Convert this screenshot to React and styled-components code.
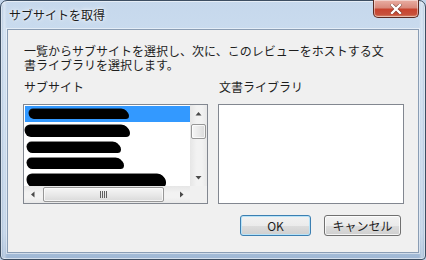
import React from "react";
import styled, { createGlobalStyle } from "styled-components";

const Global = createGlobalStyle`
  html, body { margin: 0; padding: 0; width: 426px; height: 260px; overflow: hidden; background: #c3d5ea; }
  * { box-sizing: border-box; }
`;

const FONT = `"Noto Sans CJK JP", "Noto Sans", sans-serif`;

const Window = styled.div`
  width: 426px;
  height: 260px;
  display: flex;
  flex-direction: column;
  padding: 0 6px 6px 6px;
  border: 1px solid #3d4e62;
  border-radius: 7px 7px 4px 4px;
  background:
    linear-gradient(to right, rgba(120,150,185,0.35) 0px, rgba(255,255,255,0.35) 3px, rgba(255,255,255,0) 6px, rgba(255,255,255,0) 418px, rgba(255,255,255,0.35) 421px, rgba(120,150,185,0.35) 424px),
    linear-gradient(to bottom, #c6d8ec 0%, #c9dbee 12%, #bfd3e9 50%, #b6cbe3 90%, #9fb7d4 100%);
  box-shadow: inset 0 0 0 1px rgba(255,255,255,0.55);
  font-family: ${FONT};
  color: #1e1e1e;
`;

const TitleBar = styled.div`
  height: 28px;
  display: flex;
  align-items: flex-start;
  justify-content: space-between;
`;

const Title = styled.div`
  font-size: 12px;
  line-height: 14px;
  padding: 7px 0 0 2px;
  color: #1b1b1b;
  text-shadow: 0 0 6px rgba(255,255,255,0.9), 0 0 3px rgba(255,255,255,0.9);
`;

const CloseButton = styled.div`
  width: 46px;
  height: 18px;
  margin-top: -1px;
  border: 1px solid #5a2a22;
  border-top: none;
  border-radius: 0 0 5px 5px;
  background: linear-gradient(to bottom, #e9aea3 0%, #d98a7c 45%, #c8442f 55%, #c7503b 85%, #d98d6f 100%);
  box-shadow: inset 0 0 0 1px rgba(255,255,255,0.45);
  display: flex;
  align-items: center;
  justify-content: center;
`;

const Client = styled.div`
  flex: 1;
  display: flex;
  flex-direction: column;
  background: #f0f0f0;
  border: 1px solid #8a9db4;
  box-shadow: 0 0 0 1px rgba(255,255,255,0.5);
  padding: 14px 14px 16px 15px;
  font-size: 12px;
`;

const Intro = styled.div`
  line-height: 14px;
  padding-left: 1px;
  white-space: nowrap;
`;

const Columns = styled.div`
  margin-top: 8px;
  display: grid;
  grid-template-columns: 185px 186px;
  column-gap: 10px;
`;

const Column = styled.div`
  display: flex;
  flex-direction: column;
`;

const Label = styled.div`
  line-height: 14px;
  height: 14px;
  padding-left: 1px;
  margin-bottom: 10px;
`;

const ListFrame = styled.div`
  height: 100px;
  border: 1px solid #828790;
  background: #fff;
  display: grid;
  grid-template-columns: ${(p) => (p.$scroll ? "1fr 17px" : "1fr")};
  grid-template-rows: ${(p) => (p.$scroll ? "1fr 17px" : "1fr")};
`;

const Rows = styled.div`
  padding: 1px 0 0 1px;
  overflow: hidden;
`;

const Row = styled.div`
  height: 16px;
  display: flex;
  align-items: center;
  background: ${(p) => (p.$selected ? "#3399ff" : "transparent")};
`;

const Blob = styled.span`
  display: block;
  height: ${(p) => p.$h}px;
  width: ${(p) => p.$w}px;
  margin-left: ${(p) => p.$x}px;
  margin-top: ${(p) => p.$y || 0}px;
  background: #000;
  border-radius: 6px 7px 5px 6px;
  box-shadow: 2px 1px 0 -1px #000, -1px -1px 0 -0.5px #111;
`;

const VScroll = styled.div`
  display: flex;
  flex-direction: column;
  background: linear-gradient(to right, #e6e6e6, #f2f2f2 40%, #f2f2f2 70%, #e8e8e8);
`;

const HScroll = styled.div`
  display: flex;
  align-items: stretch;
  background: linear-gradient(to bottom, #e6e6e6, #f2f2f2 40%, #f2f2f2 70%, #e8e8e8);
`;

const ArrowBtn = styled.div`
  width: 17px;
  height: 17px;
  flex: none;
  display: flex;
  align-items: center;
  justify-content: center;
`;

const Track = styled.div`
  flex: 1;
  display: flex;
  flex-direction: ${(p) => (p.$v ? "column" : "row")};
  padding: ${(p) => (p.$v ? "2px 0 0 0" : "0 0 0 2px")};
`;

const Thumb = styled.div`
  border: 1px solid #979797;
  border-radius: 2px;
  display: flex;
  align-items: center;
  justify-content: center;
  ${(p) =>
    p.$v
      ? `width: 15px; height: 15px; margin-left: 1px; background: linear-gradient(to right, #f6f6f6, #e9e9e9 50%, #dadada);`
      : `height: 15px; width: 121px; margin-top: 1px; background: linear-gradient(to bottom, #f6f6f6, #e9e9e9 50%, #dadada);`}
  box-shadow: inset 0 0 0 1px rgba(255,255,255,0.7);
`;

const Corner = styled.div`
  background: #f0f0f0;
`;

const ButtonRow = styled.div`
  margin-top: 11px;
  display: flex;
  justify-content: flex-end;
  gap: 13px;
  padding-right: 3px;
`;

const Button = styled.div`
  height: 21px;
  width: ${(p) => p.$w}px;
  border: 1px solid ${(p) => (p.$default ? "#3c7fb1" : "#707070")};
  border-radius: 3px;
  background: linear-gradient(to bottom, #f2f2f2 0%, #ebebeb 50%, #dddddd 51%, #cfcfcf 100%);
  box-shadow: inset 0 0 0 1px ${(p) => (p.$default ? "#b8e3f8" : "rgba(255,255,255,0.75)")};
  display: flex;
  align-items: center;
  justify-content: center;
  font-size: 12px;
  line-height: 14px;
  color: #1e1e1e;
`;

const Tri = ({ dir }) => {
  const pts = {
    up: "0.5,4.5 3.5,1 6.5,4.5",
    down: "0.5,1 3.5,4.5 6.5,1",
    left: "4.5,0.5 1,3.5 4.5,6.5",
    right: "1,0.5 4.5,3.5 1,6.5",
  }[dir];
  const vertical = dir === "up" || dir === "down";
  return (
    <svg width={vertical ? 7 : 5} height={vertical ? 5 : 7} viewBox={vertical ? "0 0 7 5" : "0 0 5 7"}>
      <polygon points={pts} fill="#4a4a4a" />
    </svg>
  );
};

const Grip = () => (
  <svg width="8" height="7" viewBox="0 0 8 7">
    {[0.5, 2.5, 4.5, 6.5].map((x) => (
      <line key={x} x1={x} y1="0" x2={x} y2="7" stroke="#5f5f5f" strokeWidth="1" />
    ))}
  </svg>
);

const CloseX = () => (
  <svg width="12" height="10" viewBox="0 0 12 10">
    <path d="M2 1 L10 9 M10 1 L2 9" stroke="#3a1a14" strokeWidth="3.6" strokeLinecap="square" opacity="0.5" />
    <path d="M2 1 L10 9 M10 1 L2 9" stroke="#ffffff" strokeWidth="2.4" strokeLinecap="square" />
  </svg>
);

const rows = [
  { w: 99, h: 10, x: 4, sel: true },
  { w: 104, h: 12, x: 0, y: 1 },
  { w: 93, h: 11, x: 2, y: 2 },
  { w: 96, h: 11, x: 2, y: 2 },
  { w: 138, h: 13, x: 2, y: 4 },
];

export default function App() {
  return (
    <>
      <Global />
      <Window>
        <TitleBar>
          <Title>サブサイトを取得</Title>
          <CloseButton>
            <CloseX />
          </CloseButton>
        </TitleBar>
        <Client>
          <Intro>
            一覧からサブサイトを選択し、次に、このレビューをホストする文
            <br />
            書ライブラリを選択します。
          </Intro>
          <Columns>
            <Column>
              <Label>サブサイト</Label>
              <ListFrame $scroll>
                <Rows>
                  {rows.map((r, i) => (
                    <Row key={i} $selected={r.sel}>
                      <Blob $w={r.w} $h={r.h} $x={r.x} $y={r.y} />
                    </Row>
                  ))}
                </Rows>
                <VScroll>
                  <ArrowBtn>
                    <Tri dir="up" />
                  </ArrowBtn>
                  <Track $v>
                    <Thumb $v />
                  </Track>
                  <ArrowBtn>
                    <Tri dir="down" />
                  </ArrowBtn>
                </VScroll>
                <HScroll>
                  <ArrowBtn>
                    <Tri dir="left" />
                  </ArrowBtn>
                  <Track>
                    <Thumb>
                      <Grip />
                    </Thumb>
                  </Track>
                  <ArrowBtn>
                    <Tri dir="right" />
                  </ArrowBtn>
                </HScroll>
                <Corner />
              </ListFrame>
            </Column>
            <Column>
              <Label>文書ライブラリ</Label>
              <ListFrame />
            </Column>
          </Columns>
          <ButtonRow>
            <Button $default $w={71}>OK</Button>
            <Button $w={77}>キャンセル</Button>
          </ButtonRow>
        </Client>
      </Window>
    </>
  );
}
